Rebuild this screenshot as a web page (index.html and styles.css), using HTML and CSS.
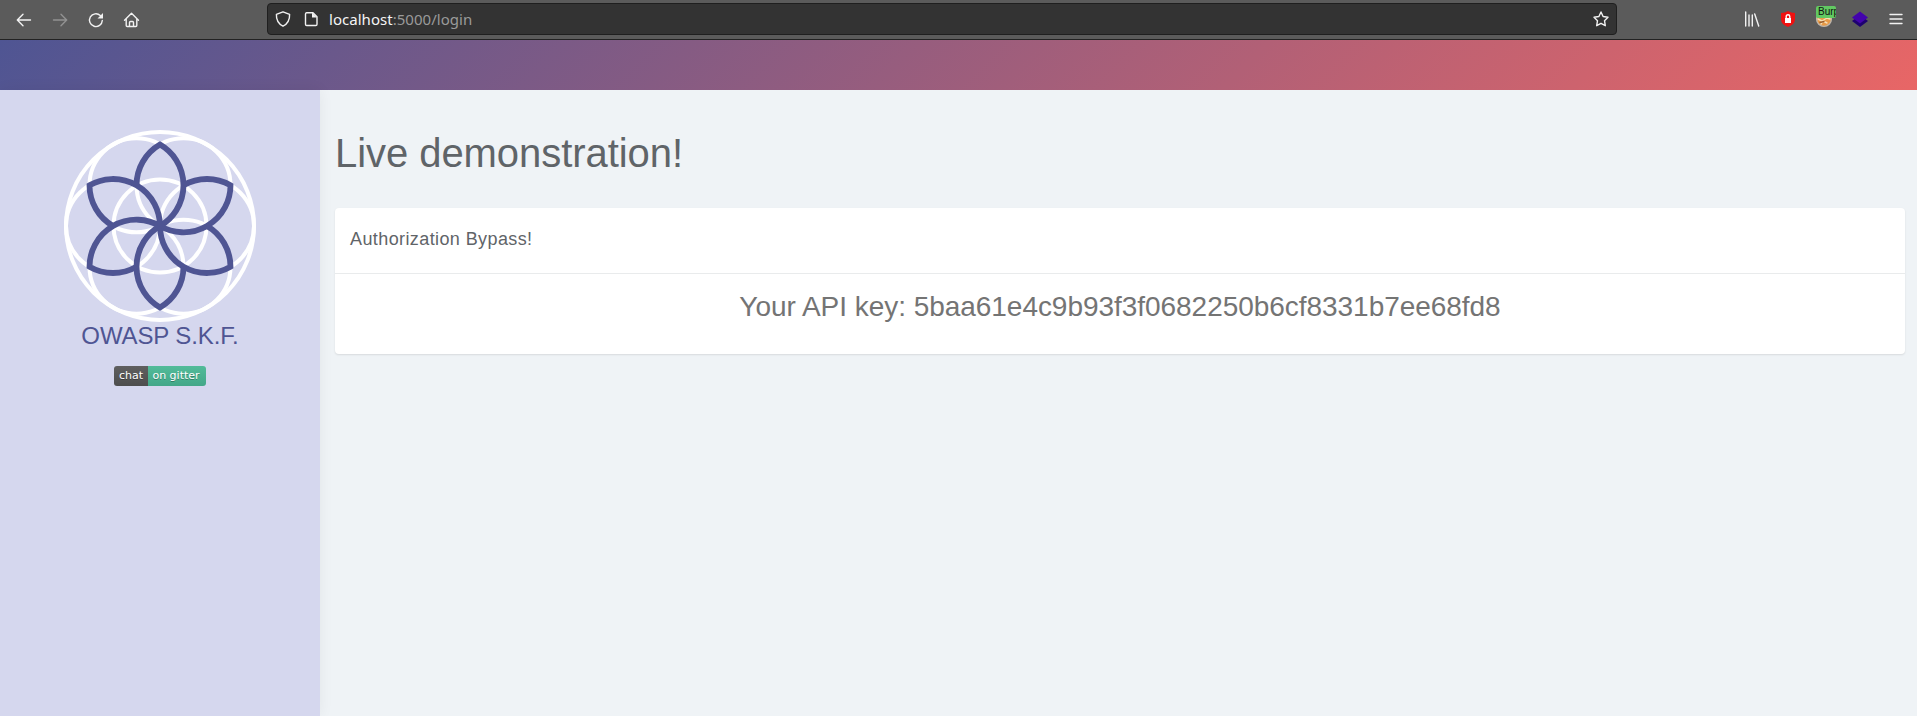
FILE: index.html
```
<!DOCTYPE html>
<html lang="en">
<head>
<meta charset="utf-8">
<title>Live demonstration!</title>
<link rel="stylesheet" href="styles.css">
</head>
<body>
<div class="toolbar">
  <div class="nav">
    <svg class="ico" viewBox="0 0 16 16"><path d="M14.500 8H1.500M7 2.300L1.300 8l5.700 5.700"/></svg>
    <svg class="ico dim" viewBox="0 0 16 16"><path d="M1.500 8h13M9 2.300L14.700 8l-5.700 5.700"/></svg>
    <svg class="ico" viewBox="0 0 16 16"><path d="M14.300 8.500A6.400 6.400 0 1 1 12.300 3.500"/><path class="solid" d="M15 1v5.500H9.500z"/></svg>
    <svg class="ico" viewBox="0 0 16 16"><path d="M.5 8.200L7.500 1.200l7 7M2.200 7v6.500q0 1 1 1h8.600q1 0 1-1V7M5.500 14.500v-4q0-1 1-1h2q1 0 1 1v4"/></svg>
  </div>
  <div class="url">
    <svg class="ico" viewBox="0 0 16 16"><path d="M8 .8L14.600 3.300C14.800 8 13.500 12.500 8 15.200 2.500 12.500 1.200 8 1.400 3.300z"/></svg>
    <svg class="ico page" viewBox="0 0 16 16"><path d="M3.500 1.700h6.500l4 4v7.600q0 1.200-1.200 1.200H3.700q-1.200 0-1.200-1.200V2.900q0-1.200 1.200-1.200z"/><path class="solid" d="M9 1.500V6.500h5z"/></svg>
    <span class="address"><b>localhost</b>:5000/login</span>
    <svg class="ico star" viewBox="0 0 16 16"><path d="M8 1l2.100 4.500 4.900.7-3.500 3.500.8 5L8 12.300l-4.300 2.400.8-5L1 6.200l4.900-.7z"/></svg>
  </div>
  <div class="addons">
    <svg class="ico" viewBox="0 0 16 16"><path d="M1.700 1v14M5 4v11M8.300 4v11M10.700 3l4 12"/></svg>
    <svg class="ico" viewBox="0 0 16 16"><path fill="#ef1111" stroke="none" d="M8 0q3 2 7 2v6q0 5.500-7 8-7-2.500-7-8V2q4 0 7-2z"/><path fill="#fff" stroke="none" d="M5 7h6v5H5z"/><path stroke="#fff" d="M6.200 7V5.500a1.800 1.800 0 0 1 3.600 0V7"/></svg>
    <div class="burp">
      <svg class="ico" viewBox="0 0 16 16"><circle cx="8" cy="8" r="7.400" fill="#e99a45" stroke="#bdb5ab"/><path d="M2 8l4 2 5-3 3 1M5 13l2-3 4 2" stroke="#f7ddb4"/><path d="M4 11.500l4-1" stroke="#9c5e2c"/></svg>
      <span class="tag">Burp</span>
    </div>
    <svg class="ico" viewBox="0 0 16 16"><path fill="#1e0070" stroke="none" d="M0 10l8-6 8 6-8 6z"/><path fill="#4303ad" stroke="none" d="M0 6.500L8 .5l8 6-8 6z"/></svg>
    <svg class="ico" viewBox="0 0 16 16"><path d="M2 3.500h12M2 8h12M2 12.500h12"/></svg>
  </div>
</div>
<header class="banner"></header>
<div class="layout">
  <aside class="sidebar">
    <svg class="logo" viewBox="-98 -98 196 196">
      <defs><path id="petal" d="M-23.500-40.700A47 47 0 0 1 0-81.400A47 47 0 0 1 0 0"/></defs>
      <g class="rings">
        <circle r="94"/><circle r="46.500"/>
        <circle cx="47" r="47"/><circle cx="-47" r="47"/>
        <circle cx="23.500" cy="-40.700" r="47"/><circle cx="-23.500" cy="-40.700" r="47"/>
        <circle cx="23.500" cy="40.700" r="47"/><circle cx="-23.500" cy="40.700" r="47"/>
      </g>
      <g class="petals">
        <use href="#petal"/><use href="#petal" transform="rotate(60)"/><use href="#petal" transform="rotate(120)"/>
        <use href="#petal" transform="rotate(180)"/><use href="#petal" transform="rotate(240)"/><use href="#petal" transform="rotate(300)"/>
      </g>
    </svg>
    <div class="brand">OWASP S.K.F.</div>
    <div class="badge"><span class="chat">chat</span><span class="gitter">on gitter</span></div>
  </aside>
  <main class="content">
    <h1>Live demonstration!</h1>
    <section class="card">
      <div class="card-head">Authorization Bypass!</div>
      <div class="card-body">Your API key: 5baa61e4c9b93f3f0682250b6cf8331b7ee68fd8</div>
    </section>
  </main>
</div>
</body>
</html>
```
FILE: styles.css
```
* { box-sizing: border-box; }
body { margin: 0; height: 716px; overflow: hidden; display: flex; flex-direction: column; background: #eff3f6; font-family: "Liberation Sans", Arial, sans-serif; }
.toolbar { flex: none; height: 40px; padding-bottom: 1px; display: flex; align-items: center; background: #5b5b5b; border-bottom: 1px solid #222; }
.ico { display: block; flex: none; width: 16px; height: 16px; fill: none; stroke: #f2f2f2; stroke-width: 1.4; stroke-linejoin: round; stroke-linecap: round; overflow: visible; }
.ico .solid { fill: #f2f2f2; stroke: none; }
.dim { stroke: #929292; }
.nav { width: 267px; padding: 1px 0 0 16px; display: flex; gap: 20px; }
.url { width: 1350px; height: 32px; display: flex; align-items: center; padding: 0 7px; background: #333; border: 1px solid #1f1f1f; border-radius: 4px; }
.page { margin-left: 12px; }
.address { margin-left: 10px; font: 15px/20px "Noto Sans", sans-serif; letter-spacing: .03px; color: #9a9a9a; }
.address b { font-weight: 400; color: #f5f5f5; }
.star { margin-left: auto; }
.addons { margin-left: 127px; display: flex; gap: 20px; }
.burp { position: relative; }
.tag { position: absolute; left: 0; top: -5px; width: 20px; height: 12px; overflow: hidden; padding-left: 2px; background: #62c962; border-radius: 2px; color: #111; font: 10px/12px "Liberation Sans", sans-serif; }
.banner { flex: none; height: 50px; background: linear-gradient(135deg, #4f5593, #e86666); }
.layout { flex: 1; display: flex; }
.sidebar { width: 320px; display: flex; flex-direction: column; align-items: center; padding-top: 38px; background: #d5d7ee; box-shadow: 0 0 14px rgba(0,0,0,.06); }
.logo { width: 196px; height: 196px; fill: none; }
.rings { stroke: #fff; stroke-width: 4; }
.petals { stroke: #4f5593; stroke-width: 5.8; }
.brand { margin-top: -2px; font-size: 24px; line-height: 28px; letter-spacing: -.12px; color: #4f5593; }
.badge { margin-top: 16px; height: 20px; display: flex; border-radius: 3px; overflow: hidden; color: #fff; font: 11px/20px "DejaVu Sans", sans-serif; text-shadow: 0 1px rgba(1,1,1,.3); }
.chat { width: 34px; text-align: center; background: linear-gradient(#5f5f5f, #4d4d4d); }
.gitter { width: 58px; padding-right: 2px; text-align: center; background: linear-gradient(#52bb99, #43a788); }
.content { flex: 1; padding: 41px 12px 0 15px; }
h1 { margin: 0 0 32px; font-size: 40px; line-height: 45px; font-weight: 400; letter-spacing: -.06px; color: #5f6468; }
.card { height: 146px; background: #fff; border-radius: 4px; box-shadow: 0 1px 2px rgba(0,0,0,.1); }
.card-head { height: 66px; padding: 20px 15px; border-bottom: 1px solid #e9ebec; font-size: 18px; line-height: 22px; letter-spacing: .4px; color: #5f6468; }
.card-body { padding-top: 17px; text-align: center; font-size: 28px; line-height: 32px; letter-spacing: -.04px; color: #747474; }
```
